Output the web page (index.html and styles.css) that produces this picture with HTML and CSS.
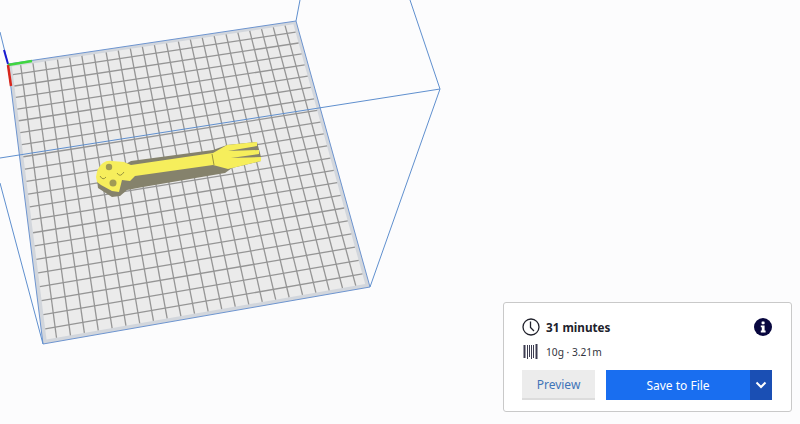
FILE: index.html
```html
<!DOCTYPE html>
<html lang="en">
<head>
    <meta charset="UTF-8">
    <meta name="viewport" content="width=device-width, initial-scale=1.0">
    <title>Prepare</title>
    <link rel="stylesheet" href="styles.css">
</head>
<body>
    <div class="viewer">
        <svg class="scene" width="800" height="424" viewBox="0 0 800 424">
            <polygon class="plate-edge" points="8,64 296,21 370,287 43,344"/>
            <polygon class="plate" id="plate_top"/>
            <g class="grid" id="grid"></g>

            <!-- build volume -->
            <g class="volume">
                <line x1="0" y1="158" x2="440" y2="89"/>
                <line x1="410" y1="0" x2="440" y2="89"/>
                <line x1="440" y1="89" x2="370" y2="287"/>
                <line x1="300" y1="0" x2="296" y2="21"/>
                <line x1="0" y1="183" x2="43" y2="344"/>
                <line x1="0" y1="32" x2="8" y2="64"/>
            </g>

            <!-- axes -->
            <line class="axis-z" x1="4" y1="50" x2="8" y2="64"/>
            <line class="axis-y" x1="8" y1="65" x2="32" y2="61"/>
            <line class="axis-x" x1="8" y1="65" x2="11" y2="86"/>

            <!-- the model -->
            <path class="model-side" d="M97,180 L98,188 L112,197 L120,196 L127,190 L143,187 L225,173 L232,168 L261,161 L261,157 L257,142 L227,145 L213,150 L131,161 L124,165 Z"/>
            <path class="model-top" d="M96,177 Q97,167 103,163 Q107,160 112,161 L124,162 L131,165 L213,153 L227,145 L257,142 L257,146 L228,151 L259,150 L259,154 L231,158 L261,157 L261,161 L228,169 L213,165 L135,176 L130,181 L122,180 L119,192 L112,191 L101,185 L97,182 Z"/>
            <circle class="model-hole" cx="109" cy="167" r="3.2"/>
            <circle class="model-hole" cx="113" cy="183" r="3.5"/>
            <path class="model-line" d="M100,176 Q103,181 106,177 M117,173 Q120,178 124,172 M212,154 L214,165"/>
        </svg>

        <div class="print-card">
            <div class="time-row">
                <svg class="clock" width="18" height="18" viewBox="0 0 18 18">
                    <circle cx="9" cy="9" r="8"/>
                    <path d="M8.5 3.5 V9.5 L12 13"/>
                </svg>
                <span class="time">31 minutes</span>
                <svg class="info" width="18" height="18" viewBox="0 0 18 18">
                    <circle cx="9" cy="9" r="9"/>
                    <rect x="7.6" y="3.4" width="3" height="2.8" rx="0.6"/>
                    <path d="M6.8 7.4 H10.6 V12.6 H11.6 V14.4 H6.8 V12.6 H7.8 V9.2 H6.8 Z"/>
                </svg>
            </div>
            <div class="material-row">
                <svg class="spool" width="15" height="16" viewBox="0 0 15 16">
                    <path class="thick" d="M1.5 1 V14 M13.5 0 V15"/>
                    <path d="M4.5 1 V15 M6.5 1 V13 M8.5 1 V15 M10.5 1 V14"/>
                </svg>
                <span class="material">10g · 3.21m</span>
            </div>
            <div class="button-row">
                <button class="preview">Preview</button>
                <button class="save">Save to File</button>
                <button class="save-more">
                    <svg width="12" height="8" viewBox="0 0 12 8"><path d="M1.5 1.5 L6 6 L10.5 1.5"/></svg>
                </button>
            </div>
        </div>
    </div>
    <script src="grid.js"></script>
</body>
</html>
```

FILE: styles.css
```css
* {
    box-sizing: border-box;
}
body {
    margin: 0;
    background-color: #fcfcfd;
    font-family: 'Noto Sans', 'Open Sans', sans-serif;
    color: #20212b;
    overflow: hidden;
}
.viewer {
    position: relative;
    width: 800px;
    height: 424px;
}
.scene {
    position: absolute;
    left: 0;
    top: 0;
}
.plate-edge {
    fill: #d2d6dc;
    stroke: #6d94cf;
    stroke-width: 1;
}
.plate {
    fill: #ebebeb;
}
.grid line {
    stroke: #959595;
    stroke-width: 1.3;
}
.volume line {
    stroke: #5f8fce;
    stroke-width: 1;
}
.axis-z {
    stroke: #1a1ad0;
    stroke-width: 2;
}
.axis-y {
    stroke: #3fd63f;
    stroke-width: 2.5;
}
.axis-x {
    stroke: #d8261c;
    stroke-width: 2.5;
}
.model-side {
    fill: #85826c;
}
.model-top {
    fill: #f6ee5c;
}
.model-hole {
    fill: #a09a55;
}
.model-line {
    fill: none;
    stroke: #8f8a3c;
    stroke-width: 0.9;
}
.print-card {
    position: absolute;
    left: 503px;
    top: 302px;
    width: 289px;
    height: 110px;
    padding: 15px 19px 12px 18px;
    background-color: #fff;
    border: 1px solid #c9c9c9;
    border-radius: 3px;
}
.time-row {
    display: flex;
    align-items: center;
    gap: 6px;
    height: 18px;
}
.time {
    flex: 1;
    font-size: 11.7px;
    font-weight: 700;
}
.clock circle,
.clock path {
    fill: none;
    stroke: #20212b;
    stroke-width: 1.3;
}
.info circle {
    fill: #08073f;
}
.info rect,
.info path {
    fill: #fff;
}
.material-row {
    display: flex;
    align-items: center;
    gap: 8px;
    height: 16px;
    margin-top: 8px;
    margin-left: 1px;
}
.material {
    font-size: 10.2px;
    color: #33343d;
}
.spool path {
    fill: none;
    stroke: #3c3c50;
    stroke-width: 1;
}
.spool .thick {
    stroke-width: 2;
}
.button-row {
    display: flex;
    margin-top: 10px;
    height: 30px;
}
button {
    border: none;
    padding: 0;
    font-family: inherit;
    font-size: 12px;
}
.preview {
    width: 73px;
    margin-right: 11px;
    background-color: #ececec;
    border-bottom: 2px solid #dcdcdc;
    color: #3f74b8;
}
.save {
    flex: 1;
    background-color: #196ef0;
    color: #fff;
}
.save-more {
    display: flex;
    align-items: center;
    justify-content: center;
    width: 22px;
    background-color: #1a4fb4;
}
.save-more path {
    fill: none;
    stroke: #fff;
    stroke-width: 2;
}
```

FILE: grid.js
```js
// plate corners on screen: top left, top right, bottom right, bottom left
const quad = [[8, 64], [296, 21], [370, 287], [43, 344]];
const CELLS_U = 24;
const CELLS_V = 22;
const MARGIN = 0.012;

// unit square to quad projection
function makeProject(q) {
    const [[x0, y0], [x1, y1], [x2, y2], [x3, y3]] = q;
    const dx1 = x1 - x2, dx2 = x3 - x2, sx = x0 - x1 + x2 - x3;
    const dy1 = y1 - y2, dy2 = y3 - y2, sy = y0 - y1 + y2 - y3;
    const det = dx1 * dy2 - dx2 * dy1;
    const g = (sx * dy2 - dx2 * sy) / det;
    const h = (dx1 * sy - sx * dy1) / det;
    const a = x1 - x0 + g * x1, b = x3 - x0 + h * x3;
    const d = y1 - y0 + g * y1, e = y3 - y0 + h * y3;
    return (u, v) => {
        const w = g * u + h * v + 1;
        return [(a * u + b * v + x0) / w, (d * u + e * v + y0) / w];
    };
}

const project = makeProject(quad);
const grid = document.getElementById("grid");

function addLine(from, to) {
    const line = document.createElementNS("http://www.w3.org/2000/svg", "line");
    line.setAttribute("x1", from[0]);
    line.setAttribute("y1", from[1]);
    line.setAttribute("x2", to[0]);
    line.setAttribute("y2", to[1]);
    grid.appendChild(line);
}

const lo = MARGIN, hi = 1 - MARGIN;
document.getElementById("plate_top").setAttribute("points",
    [[lo, lo], [hi, lo], [hi, hi], [lo, hi]].map(p => project(p[0], p[1]).join(",")).join(" "));

for (let i = 1; i < CELLS_U; i++) {
    const u = i / CELLS_U;
    addLine(project(u, lo), project(u, hi));
}
for (let i = 1; i < CELLS_V; i++) {
    const v = i / CELLS_V;
    addLine(project(lo, v), project(hi, v));
}
```
